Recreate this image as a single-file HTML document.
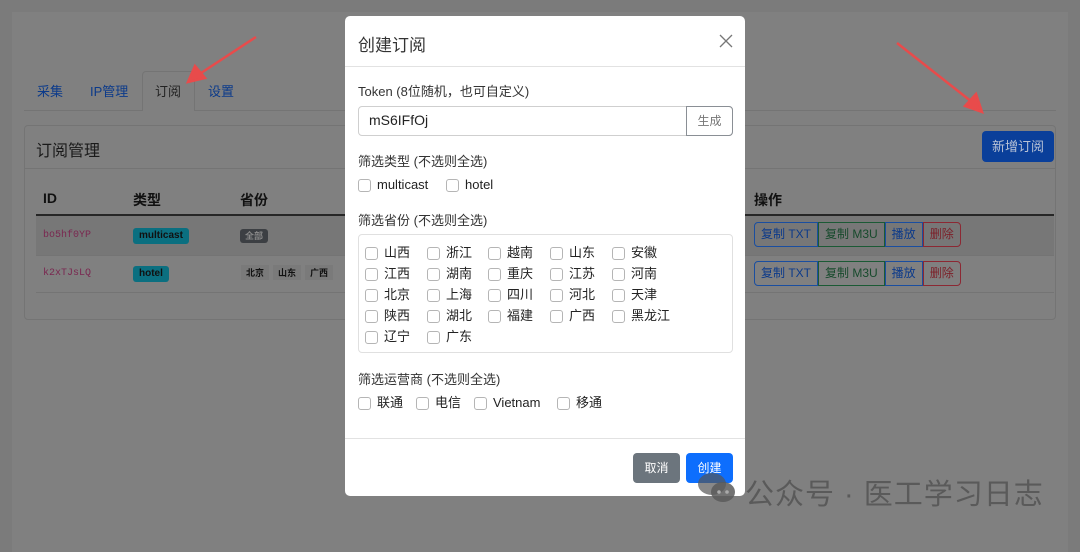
<!DOCTYPE html>
<html><head><meta charset="utf-8"><style>
*{box-sizing:border-box;margin:0;padding:0}
body{width:1080px;height:533px;overflow:hidden;background:#7b7b7b;font-family:"Liberation Sans","Noto Sans CJK SC",sans-serif;position:relative;color:#1e1e1e}
.a{position:absolute}
.wrap{left:12px;top:12px;width:1056px;height:540px;background:#808080}
.tab{font-size:13px;color:#0b3a8a}
.card{left:24px;top:125px;width:1032px;height:195px;border:1px solid #747474;border-radius:4px}
.th{font-size:14px;font-weight:bold;color:#111;top:190px}
.mono{font-family:"Liberation Mono",monospace;font-size:10px;color:#7a2750}
.badge{font-size:10px;font-weight:bold;color:#111;background:#0b6f80;border-radius:3px;padding:1px 6px;line-height:14px}
.grp{display:flex;font-size:12px;height:25px}
.grp span{border:1px solid;padding:0 6px;line-height:23px}
.modal{left:345px;top:16px;width:400px;height:480px;background:#fff;border-radius:5px}
.lbl{font-size:13px;color:#333}
.cb{display:inline-block;width:13px;height:13px;border:1px solid #b5b5b5;border-radius:3px;margin-right:6px;flex:none}
.it{font-size:13px;color:#222;position:absolute;display:flex;align-items:center;height:16px;line-height:16px}
</style></head><body>
<div class="a wrap"></div>
<div class="a" style="left:24px;top:110px;width:1032px;height:1px;background:#747474"></div>
<div class="a" style="left:142px;top:71px;width:53px;height:40px;border:1px solid #747474;border-bottom:none;background:#808080;border-radius:4px 4px 0 0"></div>
<div class="a tab" style="left:37px;top:81px">采集</div>
<div class="a tab" style="left:90px;top:81px">IP管理</div>
<div class="a tab" style="left:155px;top:81px;color:#222">订阅</div>
<div class="a tab" style="left:208px;top:81px">设置</div>
<div class="a card"></div>
<div class="a" style="left:36px;top:137px;font-size:16px;color:#1a1a1a">订阅管理</div>
<div class="a" style="left:24px;top:168px;width:1032px;height:1px;background:#747474"></div>
<div class="a" style="left:982px;top:131px;width:72px;height:31px;background:#0a3f9a;border-radius:4px;color:#b9c3d6;font-size:13px;line-height:31px;text-align:center">新增订阅</div>
<div class="a th" style="left:43px">ID</div>
<div class="a th" style="left:133px">类型</div>
<div class="a th" style="left:240px">省份</div>
<div class="a th" style="left:754px">操作</div>
<div class="a" style="left:36px;top:214px;width:1018px;height:2px;background:#262626"></div>
<div class="a" style="left:36px;top:216px;width:1018px;height:39px;background:#777"></div>
<div class="a" style="left:36px;top:255px;width:1018px;height:1px;background:#747474"></div>
<div class="a" style="left:36px;top:292px;width:1018px;height:1px;background:#747474"></div>
<div class="a mono" style="left:43px;top:230px">bo5hf0YP</div>
<div class="a mono" style="left:43px;top:268px">k2xTJsLQ</div>
<div class="a badge" style="left:133px;top:228px">multicast</div>
<div class="a badge" style="left:133px;top:266px">hotel</div>
<div class="a badge" style="left:240px;top:229px;background:#3c3f43;color:#888;font-size:9px;padding:0 5px">全部</div>
<div class="a" style="left:241px;top:265px;font-size:9px;font-weight:bold;color:#111;display:flex;gap:4px"><span style="background:#7a7a7a;padding:1px 5px">北京</span><span style="background:#7a7a7a;padding:1px 5px">山东</span><span style="background:#7a7a7a;padding:1px 5px">广西</span></div>
<div class="a grp" style="left:754px;top:222px"><span style="border-color:#1a4ea0;color:#0c3a8a;border-radius:4px 0 0 4px">复制 TXT</span><span style="border-color:#1b5a35;color:#174a2c">复制 M3U</span><span style="border-color:#1a4ea0;color:#0c3a8a">播放</span><span style="border-color:#8c2833;color:#7c1f28;border-radius:0 4px 4px 0">删除</span></div>
<div class="a grp" style="left:754px;top:261px"><span style="border-color:#1a4ea0;color:#0c3a8a;border-radius:4px 0 0 4px">复制 TXT</span><span style="border-color:#1b5a35;color:#174a2c">复制 M3U</span><span style="border-color:#1a4ea0;color:#0c3a8a">播放</span><span style="border-color:#8c2833;color:#7c1f28;border-radius:0 4px 4px 0">删除</span></div>
<svg class="a" style="left:0;top:0" width="1080" height="533"><g stroke="#e84b4b" stroke-width="2.5" fill="#e84b4b"><line x1="256" y1="37" x2="198" y2="75"/><polygon points="188,82 195,66 205,78"/><line x1="897" y1="43" x2="972" y2="102"/><polygon points="982,112 965,106 976,94"/></g></svg>

<div class="a modal">
<div class="a" style="left:13px;top:15px;font-size:17px;color:#333">创建订阅</div>
<svg class="a" style="left:374px;top:18px" width="14" height="14"><path d="M1 1L13 13M13 1L1 13" stroke="#777" stroke-width="1.3"/></svg>
<div class="a" style="left:0;top:50px;width:400px;height:1px;background:#e2e2e2"></div>
<div class="a lbl" style="left:13px;top:65px">Token (8位随机，也可自定义)</div>
<div class="a" style="left:13px;top:90px;width:375px;height:30px;border:1px solid #cfcfcf;border-radius:4px"></div>
<div class="a" style="left:341px;top:90px;width:47px;height:30px;border:1px solid #8a8f95;border-radius:0 4px 4px 0;font-size:12px;color:#777;text-align:center;line-height:28px">生成</div>
<div class="a" style="left:24px;top:96px;font-size:14px;color:#222">mS6IFfOj</div>
<div class="a lbl" style="left:13px;top:135px">筛选类型 (不选则全选)</div>
<div class="it" style="left:13px;top:161px"><i class="cb"></i>multicast</div>
<div class="it" style="left:101px;top:161px"><i class="cb"></i>hotel</div>
<div class="a lbl" style="left:13px;top:194px">筛选省份 (不选则全选)</div>
<div class="a" style="left:13px;top:218px;width:375px;height:119px;border:1px solid #e0e0e0;border-radius:4px"></div>
<div class="it" style="left:20px;top:229px"><i class="cb"></i>山西</div><div class="it" style="left:82px;top:229px"><i class="cb"></i>浙江</div><div class="it" style="left:143px;top:229px"><i class="cb"></i>越南</div><div class="it" style="left:205px;top:229px"><i class="cb"></i>山东</div><div class="it" style="left:267px;top:229px"><i class="cb"></i>安徽</div>
<div class="it" style="left:20px;top:250px"><i class="cb"></i>江西</div><div class="it" style="left:82px;top:250px"><i class="cb"></i>湖南</div><div class="it" style="left:143px;top:250px"><i class="cb"></i>重庆</div><div class="it" style="left:205px;top:250px"><i class="cb"></i>江苏</div><div class="it" style="left:267px;top:250px"><i class="cb"></i>河南</div>
<div class="it" style="left:20px;top:271px"><i class="cb"></i>北京</div><div class="it" style="left:82px;top:271px"><i class="cb"></i>上海</div><div class="it" style="left:143px;top:271px"><i class="cb"></i>四川</div><div class="it" style="left:205px;top:271px"><i class="cb"></i>河北</div><div class="it" style="left:267px;top:271px"><i class="cb"></i>天津</div>
<div class="it" style="left:20px;top:292px"><i class="cb"></i>陕西</div><div class="it" style="left:82px;top:292px"><i class="cb"></i>湖北</div><div class="it" style="left:143px;top:292px"><i class="cb"></i>福建</div><div class="it" style="left:205px;top:292px"><i class="cb"></i>广西</div><div class="it" style="left:267px;top:292px"><i class="cb"></i>黑龙江</div>
<div class="it" style="left:20px;top:313px"><i class="cb"></i>辽宁</div><div class="it" style="left:82px;top:313px"><i class="cb"></i>广东</div>
<div class="a lbl" style="left:13px;top:353px">筛选运营商 (不选则全选)</div>
<div class="it" style="left:13px;top:379px"><i class="cb"></i>联通</div>
<div class="it" style="left:71px;top:379px"><i class="cb"></i>电信</div>
<div class="it" style="left:129px;top:379px"><i class="cb"></i>Vietnam</div>
<div class="it" style="left:212px;top:379px"><i class="cb"></i>移通</div>
<div class="a" style="left:0;top:422px;width:400px;height:1px;background:#e2e2e2"></div>
<div class="a" style="left:288px;top:437px;width:47px;height:30px;background:#6c757d;border-radius:4px;color:#fff;font-size:12px;text-align:center;line-height:30px">取消</div>
<div class="a" style="left:341px;top:437px;width:47px;height:30px;background:#0d6efd;border-radius:4px;color:#fff;font-size:12px;text-align:center;line-height:30px">创建</div>
</div>
<svg class="a" style="left:693px;top:470px" width="50" height="40"><ellipse cx="19" cy="14" rx="14" ry="11" fill="#555" opacity=".7"/><ellipse cx="30" cy="22" rx="12" ry="10" fill="#5a5a5a" opacity=".85"/><circle cx="26" cy="22" r="1.8" fill="#aaa"/><circle cx="34" cy="22" r="1.8" fill="#aaa"/></svg>
<div class="a" style="left:745px;top:471px;font-size:29px;color:#5a5a5a;letter-spacing:1px">公众号 · 医工学习日志</div>
</body></html>
